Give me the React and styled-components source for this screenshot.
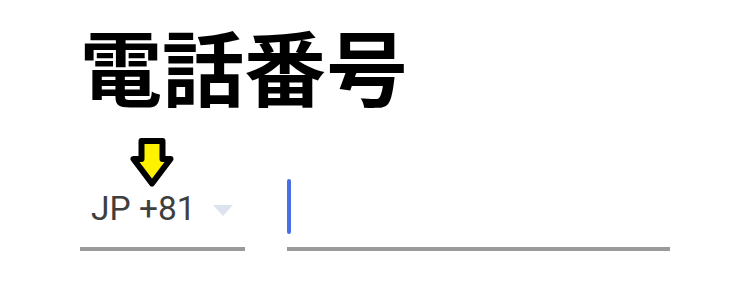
import React from "react";
import styled, { createGlobalStyle } from "styled-components";

const GlobalStyle = createGlobalStyle`
  body {
    margin: 0;
    background: #fff;
  }
`;

const Page = styled.div`
  width: 750px;
  height: 283px;
  padding: 10px 0 0 80px;
  box-sizing: border-box;
  font-family: Roboto, "Noto Sans CJK JP", sans-serif;
`;

const Title = styled.h1`
  margin: 0;
  font-family: "Noto Sans CJK JP", sans-serif;
  font-weight: 700;
  font-size: 82px;
  line-height: 110px;
  color: #000;
`;

const Row = styled.div`
  display: flex;
  gap: 42px;
  margin-top: 57px;
`;

const Select = styled.div`
  position: relative;
  width: 165px;
  height: 74px;
  display: flex;
  align-items: flex-end;
  padding: 0 0 20px 11px;
  box-sizing: border-box;
  border-bottom: 4px solid #9a9a9a;
`;

const Code = styled.span`
  font-size: 33.5px;
  line-height: 36px;
  color: #3f3f3f;
`;

const Caret = styled.span`
  width: 0;
  height: 0;
  margin: 0 0 11px 17px;
  border-left: 10px solid transparent;
  border-right: 10px solid transparent;
  border-top: 11px solid #dce3ee;
`;

const Pointer = styled.svg`
  position: absolute;
  left: 50px;
  top: -40px;
`;

const Input = styled.div`
  width: 383px;
  height: 74px;
  display: flex;
  align-items: flex-end;
  padding-bottom: 13px;
  box-sizing: border-box;
  border-bottom: 4px solid #9a9a9a;
`;

const Cursor = styled.span`
  width: 4px;
  height: 55px;
  border-radius: 2px;
  background: #4a6fe3;
`;

export default function App() {
  return (
    <>
      <GlobalStyle />
      <Page>
        <Title>電話番号</Title>
        <Row>
          <Select>
            <Pointer width="44" height="51" viewBox="0 0 44 51">
              <path
                d="M11.5 4 H32.5 V22 H40.5 L22 46.5 L3.5 22 H11.5 Z"
                fill="#fff200"
                stroke="#000"
                strokeWidth="6"
                strokeLinejoin="round"
              />
            </Pointer>
            <Code>JP +81</Code>
            <Caret />
          </Select>
          <Input>
            <Cursor />
          </Input>
        </Row>
      </Page>
    </>
  );
}
